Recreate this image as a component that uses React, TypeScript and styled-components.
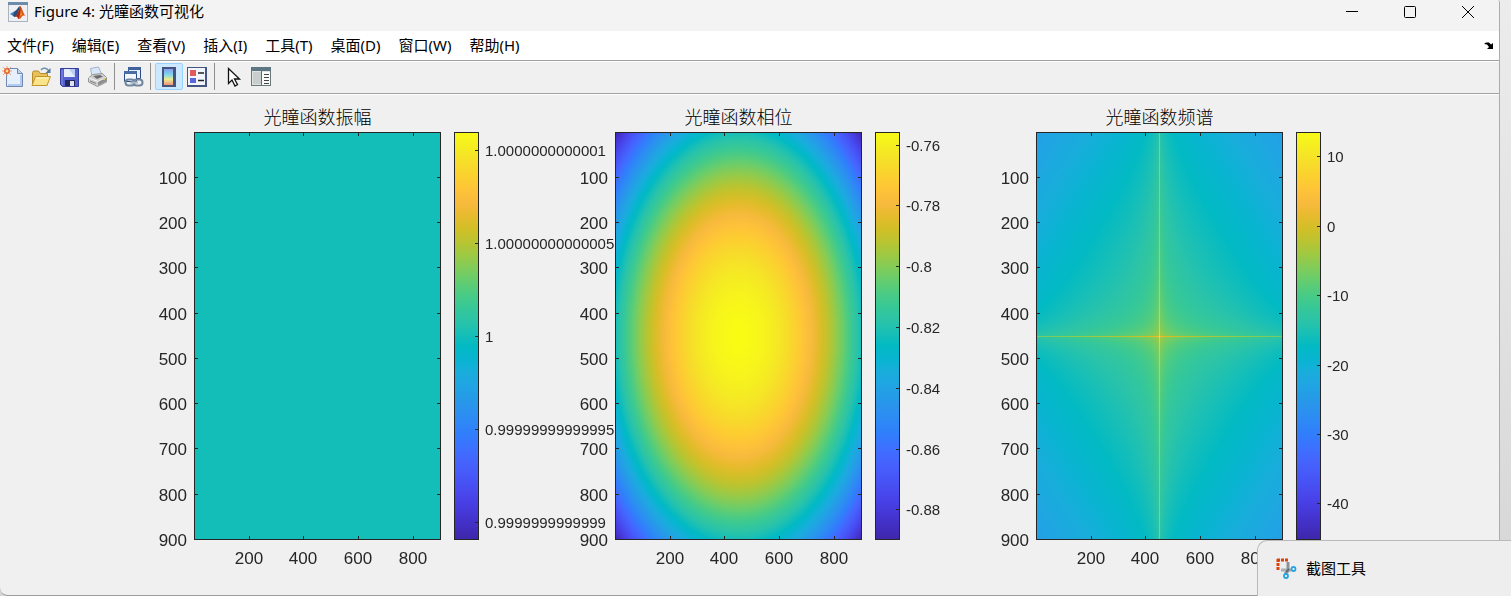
import { useLayoutEffect, useRef, useState } from 'react'
import type { ReactNode } from 'react'
import styled, { createGlobalStyle } from 'styled-components'

type Rgb = [number, number, number]

// every second colour of the 64 step parula map, plus its last one
const PARULA: Rgb[] = [
  [62, 38, 168], [66, 46, 192], [69, 55, 213], [71, 65, 230],
  [72, 77, 240], [71, 88, 248], [69, 99, 253], [62, 111, 255],
  [50, 124, 252], [46, 135, 247], [43, 145, 239], [37, 155, 232],
  [32, 165, 227], [24, 173, 219], [8, 181, 208], [2, 186, 195],
  [25, 191, 182], [44, 196, 167], [55, 200, 151], [74, 203, 132],
  [100, 205, 111], [129, 204, 89], [157, 201, 67], [185, 196, 49],
  [209, 191, 39], [230, 187, 45], [248, 186, 61], [254, 195, 56],
  [252, 207, 48], [247, 220, 42], [245, 233, 36], [247, 245, 27],
  [249, 251, 21],
]

const stopAt = (i: number) => Math.min((i * 2) / 63, 1)

const parula = (t: number): Rgb => {
  const p = Math.min(Math.max(t, 0), 1)
  const i = Math.min(Math.floor((p * 63) / 2), PARULA.length - 2)
  const f = (p - stopAt(i)) / (stopAt(i + 1) - stopAt(i))
  return [0, 1, 2].map((c) => PARULA[i][c] + (PARULA[i + 1][c] - PARULA[i][c]) * f) as Rgb
}

const parulaGradient = PARULA.map((c, i) => `rgb(${c.join(',')}) ${stopAt(i) * 100}%`).join(', ')

type Field = (u: number, v: number, du: number, dv: number) => number

const amplitude: Field = () => 0.5

const phase: Field = (u, v) => 1 - (u * u + v * v) / 2

// log magnitude along one axis of the separable spectrum
const logMag = (u: number, du: number, peak: number) => {
  const a = Math.abs(u)
  if (a < du / 2) return peak
  return -9.15 - 2.8 * a * a - 2 * Math.log(a + 0.02)
}

const spectrum: Field = (u, v, du, dv) =>
  (logMag(u, du, 8.8) + logMag(v - dv / 2, dv, 4.4) + 45.2) / 58.7

interface ColorTick {
  label: string
  at: number
}

interface PlotData {
  title: string
  field: Field
  ticks: ColorTick[]
}

const scale = (labels: string[], first: number, step: number): ColorTick[] =>
  labels.map((label, i) => ({ label, at: first + step * i }))

const PLOTS: PlotData[] = [
  {
    title: '光瞳函数振幅',
    field: amplitude,
    ticks: scale(
      ['1.0000000000001', '1.00000000000005', '1', '0.99999999999995', '0.9999999999999'],
      0.043,
      0.228
    ),
  },
  {
    title: '光瞳函数相位',
    field: phase,
    ticks: scale(['-0.76', '-0.78', '-0.8', '-0.82', '-0.84', '-0.86', '-0.88'], 0.031, 0.149),
  },
  {
    title: '光瞳函数频谱',
    field: spectrum,
    ticks: scale(['10', '0', '-10', '-20', '-30', '-40'], 0.06, 0.17),
  },
]

const X_TICKS = [200, 400, 600, 800]
const Y_TICKS = [100, 200, 300, 400, 500, 600, 700, 800, 900]
const SAMPLES = 900

const useSize = () => {
  const ref = useRef<HTMLDivElement>(null)
  const [size, setSize] = useState({ w: 0, h: 0 })

  useLayoutEffect(() => {
    const el = ref.current
    if (!el) return
    const measure = () => setSize({ w: el.clientWidth, h: el.clientHeight })
    measure()
    const observer = new ResizeObserver(measure)
    observer.observe(el)
    return () => observer.disconnect()
  }, [])

  return { ref, ...size }
}

const Heatmap = ({ field, w, h }: { field: Field; w: number; h: number }) => {
  const ref = useRef<HTMLCanvasElement>(null)

  useLayoutEffect(() => {
    const ctx = ref.current?.getContext('2d')
    if (!ctx || !w || !h) return
    const image = ctx.createImageData(w, h)
    for (let y = 0; y < h; y++) {
      for (let x = 0; x < w; x++) {
        const u = ((x + 0.5) / w) * 2 - 1
        const v = ((y + 0.5) / h) * 2 - 1
        const [r, g, b] = parula(field(u, v, 2 / w, 2 / h))
        image.data.set([r, g, b, 255], (y * w + x) * 4)
      }
    }
    ctx.putImageData(image, 0, 0)
  }, [field, w, h])

  return <Canvas ref={ref} width={w} height={h} />
}

const Axes = ({ title, field }: { title: string; field: Field }) => {
  const { ref, w, h } = useSize()
  const px = (v: number) => Math.round(((v - 0.5) / SAMPLES) * (w - 1))
  const py = (v: number) => Math.round(((v - 0.5) / SAMPLES) * (h - 1))

  return (
    <PlotBox ref={ref}>
      <Heatmap field={field} w={w} h={h} />
      <Overlay role='img' aria-label={title}>
        {w > 0 && <rect className='frame' x={0.5} y={0.5} width={w - 1} height={h - 1} />}
        {X_TICKS.map((v) => (
          <g key={v}>
            <rect x={px(v)} y={0} width={1} height={4} />
            <rect x={px(v)} y={h - 4} width={1} height={4} />
            <text className='axis' x={px(v)} y={h + 24} textAnchor='middle'>
              {v}
            </text>
          </g>
        ))}
        {Y_TICKS.map((v) => (
          <g key={v}>
            <rect x={0} y={py(v)} width={4} height={1} />
            <rect x={w - 4} y={py(v)} width={4} height={1} />
            <text className='axis' x={-7} y={py(v) + 7} textAnchor='end'>
              {v}
            </text>
          </g>
        ))}
      </Overlay>
    </PlotBox>
  )
}

const Colorbar = ({ ticks }: { ticks: ColorTick[] }) => {
  const { ref, w, h } = useSize()

  return (
    <ColorBox ref={ref}>
      <Overlay>
        {w > 0 && <rect className='frame' x={0.5} y={0.5} width={w - 1} height={h - 1} />}
        {ticks.map(({ label, at }) => {
          const y = Math.round(at * h)
          return (
            <g key={label}>
              <rect x={w - 4} y={y} width={4} height={1} />
              <text className='scale' x={w + 6} y={y + 6}>
                {label}
              </text>
            </g>
          )
        })}
      </Overlay>
    </ColorBox>
  )
}

const MatlabLogo = () => (
  <svg width='20' height='20' viewBox='0 0 20 20'>
    <rect x='0.5' y='0.5' width='19' height='19' fill='#eef0f3' stroke='#aab4c0' />
    <rect x='0' y='0' width='20' height='3' fill='#6d8cab' />
    <path d='M2 12l5-3 3 2-3 4z' fill='#3d7ab8' />
    <path d='M7 9c2-1 3-4 5-5l-2 8-3 3-2-1z' fill='#274f7d' />
    <path d='M12 4c2 1 3 7 6 11-2-2-3-2-5 1-1 1-2 1-3 1 0-2-1-3-3-2 3-3 4-7 5-11z' fill='#dd5a1c' />
    <path d='M12 4c1 3 1 8-2 13 0-2-1-3-3-2 3-3 4-7 5-11z' fill='#a52b18' />
    <path d='M12 5c1 3 1 6 0 9l2-1z' fill='#f6a02d' />
  </svg>
)

const NewIcon = () => (
  <svg width='22' height='22' viewBox='0 0 22 22'>
    <path d='M4.5 2.500h11l5 5v13h-16z' fill='#e6f0fc' stroke='#6f87b5' />
    <path d='M19 9v10H6' fill='none' stroke='#b4cbed' strokeWidth='2' />
    <path d='M15.500 2.500v5h5' fill='#bfd2ee' stroke='#6f87b5' />
    <path d='M1 1l8 8M9 1L1 9M5 0v10M0 5h10' stroke='#eaa17c' />
    <circle cx='5' cy='5' r='3' fill='#e8642d' />
    <circle cx='5' cy='5' r='1.400' fill='#ffd9a0' />
  </svg>
)

const OpenIcon = () => (
  <svg width='22' height='22' viewBox='0 0 22 22'>
    <path d='M2.500 19V6.500l1-1.500h5l2 2.500h7V19z' fill='#e9c057' stroke='#b58a27' />
    <path d='M5.500 10.500h15l-3.500 9H2z' fill='#fbe38a' stroke='#c2952c' />
    <path d='M6 12h12' stroke='#fff6c5' />
    <path d='M11 4c2-3 6-2 8 1' fill='none' stroke='#6f8fae' strokeWidth='1.500' />
    <path d='M20.500 2v5h-5z' fill='#54789c' />
  </svg>
)

const SaveIcon = () => (
  <svg width='22' height='22' viewBox='0 0 22 22'>
    <path d='M2.500 2.500h18v18h-16l-2-2z' fill='#5560d0' stroke='#343c9c' />
    <path d='M4 4v14l1 1' fill='none' stroke='#8790ec' />
    <path d='M6 3h11v8H6z' fill='#e6eefc' />
    <path d='M11 3h6v8z' fill='#b8cdf3' />
    <path d='M7 14h10v6H7z' fill='#23285e' />
    <path d='M12 15h4v5h-4z' fill='#dfe3f0' />
  </svg>
)

const PrintIcon = () => (
  <svg width='22' height='22' viewBox='0 0 22 22'>
    <path d='M6 10L4.500 2.500l8-1.500 3.500 8z' fill='#d9e6f8' stroke='#a3b4cd' />
    <path d='M2.500 12l4-3.500 10-1 4 4v4.500l-9 4.500-9-4.500z' fill='#cfcfcf' stroke='#979797' />
    <path d='M3 12l9 3.500 8-4' fill='none' stroke='#f5f5f5' />
    <path d='M7 10l7-1 3 1.500-6 2.500z' fill='#6c6c6c' />
    <path d='M12 16l8-4v3.500l-8 4z' fill='#8e8e8e' />
    <path d='M4 15l6 2.500' stroke='#777' />
    <rect x='17' y='12.500' width='2' height='1.500' fill='#d8cf52' />
  </svg>
)

const LinkIcon = () => (
  <svg width='22' height='22' viewBox='0 0 22 22'>
    <path d='M6.500 1.500h12v11h-12z' fill='#e8f0fa' stroke='#2b4a82' />
    <path d='M6 1h13v3H6z' fill='#3f629c' />
    <path d='M2.500 5.500h12v10h-12z' fill='#f3f7fc' stroke='#2b4a82' />
    <path d='M2 5h13v3H2z' fill='#4a6da8' />
    <rect x='3.500' y='13.500' width='9' height='6' rx='3' fill='none' stroke='#71869e' strokeWidth='2' />
    <rect x='11.500' y='13.500' width='9' height='6' rx='3' fill='none' stroke='#71869e' strokeWidth='2' />
    <path d='M8 16.500h8' stroke='#a9bacb' strokeWidth='2' />
  </svg>
)

const ColorbarIcon = () => (
  <svg width='22' height='22' viewBox='0 0 22 22'>
    <defs>
      <linearGradient id='bar' x1='0' y1='0' x2='0' y2='1'>
        <stop offset='0' stopColor='#86a0f0' />
        <stop offset='0.350' stopColor='#7fd6ea' />
        <stop offset='0.650' stopColor='#ecec8e' />
        <stop offset='1' stopColor='#f0917c' />
      </linearGradient>
    </defs>
    <rect x='4' y='1' width='14' height='20' fill='#46557f' />
    <rect x='6' y='3' width='9' height='16' fill='url(#bar)' />
  </svg>
)

const LegendIcon = () => (
  <svg width='22' height='22' viewBox='0 0 22 22'>
    <rect x='1' y='1' width='20' height='20' fill='#46557f' />
    <rect x='2' y='2' width='17' height='17' fill='#f1f5fc' />
    <rect x='4' y='4' width='6' height='6' fill='#e2595c' />
    <rect x='4' y='12' width='6' height='5' fill='#5a66dd' />
    <path d='M12 7h6M12 14.500h6' stroke='#222' strokeWidth='1.500' />
  </svg>
)

const CursorIcon = () => (
  <svg width='22' height='22' viewBox='0 0 22 22'>
    <path d='M6.500 2.500v15l3.500-3.500 3 6 2.500-1.500-3-5.500h5z' fill='#fff' stroke='#111' strokeWidth='1.300' />
  </svg>
)

const InspectorIcon = () => (
  <svg width='22' height='22' viewBox='0 0 22 22'>
    <rect x='1.500' y='1.500' width='19' height='18' fill='#dfe3e4' stroke='#6c7779' />
    <rect x='1' y='1' width='20' height='4' fill='#5d7682' />
    <rect x='3' y='6' width='8' height='12' fill='#c8cdce' />
    <rect x='12' y='6' width='8' height='13' fill='#fafafa' />
    <path d='M11.500 5v14' stroke='#5f6a6d' />
    <path d='M14 8.500h5M14 11.500h5M14 14.500h5M14 17.500h5' stroke='#444' />
  </svg>
)

const SnipIcon = () => (
  <svg width='22' height='22' viewBox='0 0 22 22'>
    <path d='M2 3h11M3 2v11' stroke='#d8420f' strokeWidth='3' strokeDasharray='3 1' fill='none' />
    <path d='M6 13h10' stroke='#a9b0b6' strokeWidth='3' />
    <path d='M13 5v9l-3 3' stroke='#8b9299' strokeWidth='3' fill='none' />
    <path d='M11 15l3-3' stroke='#5d656c' strokeWidth='1.500' />
    <circle cx='18.500' cy='12' r='2' fill='#fff' stroke='#27a3e2' strokeWidth='1.800' />
    <circle cx='11' cy='19' r='2' fill='#fff' stroke='#27a3e2' strokeWidth='1.800' />
  </svg>
)

const MENUS = ['文件(F)', '编辑(E)', '查看(V)', '插入(I)', '工具(T)', '桌面(D)', '窗口(W)', '帮助(H)']

const TOOL_GROUPS: { name: string; icon: ReactNode; active?: boolean }[][] = [
  [
    { name: '新建图窗', icon: <NewIcon /> },
    { name: '打开文件', icon: <OpenIcon /> },
    { name: '保存图窗', icon: <SaveIcon /> },
    { name: '打印图窗', icon: <PrintIcon /> },
  ],
  [{ name: '链接绘图', icon: <LinkIcon /> }],
  [
    { name: '插入颜色栏', icon: <ColorbarIcon />, active: true },
    { name: '插入图例', icon: <LegendIcon /> },
  ],
  [
    { name: '编辑绘图', icon: <CursorIcon /> },
    { name: '打开属性检查器', icon: <InspectorIcon /> },
  ],
]

const App = () => {
  return (
    <Desktop>
      <GlobalStyle />
      <Window>
        <TitleBar>
          <MatlabLogo />
          <WindowTitle>Figure 4: 光瞳函数可视化</WindowTitle>
          <CaptionButton aria-label='最小化'>
            <svg width='14' height='14' viewBox='0 0 14 14'>
              <path d='M1 6.500h12' />
            </svg>
          </CaptionButton>
          <CaptionButton aria-label='最大化'>
            <svg width='14' height='14' viewBox='0 0 14 14'>
              <rect x='1.500' y='1.500' width='11' height='11' rx='1' />
            </svg>
          </CaptionButton>
          <CaptionButton aria-label='关闭'>
            <svg width='14' height='14' viewBox='0 0 14 14'>
              <path d='M1 1l12 12M13 1L1 13' />
            </svg>
          </CaptionButton>
        </TitleBar>

        <MenuBar>
          {MENUS.map((menu) => (
            <MenuButton key={menu}>{menu}</MenuButton>
          ))}
          <DockButton aria-label='停靠'>
            <svg width='10' height='8' viewBox='0 0 10 8'>
              <path d='M0 2l2-1.500 3 0 2 2L9 1v6H3l2-2-2-2.500z' fill='#000' />
            </svg>
          </DockButton>
        </MenuBar>

        <Toolbar role='toolbar'>
          {TOOL_GROUPS.map((group) => (
            <ToolGroup key={group[0].name}>
              {group.map(({ name, icon, active }) => (
                <ToolButton key={name} aria-label={name} $active={active}>
                  {icon}
                </ToolButton>
              ))}
            </ToolGroup>
          ))}
        </Toolbar>

        <Figure>
          {PLOTS.map(({ title, field, ticks }) => (
            <Panel key={title}>
              <PlotTitle>{title}</PlotTitle>
              <Axes title={title} field={field} />
              <Colorbar ticks={ticks} />
            </Panel>
          ))}
        </Figure>
      </Window>

      <Toast>
        <SnipIcon />
        <span>截图工具</span>
      </Toast>
    </Desktop>
  )
}

const GlobalStyle = createGlobalStyle`
  * {
    box-sizing: border-box;
  }

  body {
    margin: 0;
    font-family: 'Noto Sans', 'Noto Sans CJK SC', sans-serif;
    color: #000;
  }

  button {
    padding: 0;
    border: 0;
    background: none;
    color: inherit;
    font: inherit;
  }

  svg {
    display: block;
    flex-shrink: 0;
  }
`

const Desktop = styled.div`
  position: relative;
  display: flex;
  min-height: 100vh;
  padding-right: 11px;
  overflow: hidden;
  background: linear-gradient(#ececec, #d6d6d6);
`

const Window = styled.div`
  flex: 1;
  display: flex;
  flex-direction: column;
  min-width: 0;
  border-right: 1px solid #acacac;
  border-bottom: 1px solid #9c9c9c;
  border-radius: 0 3px 0 8px;
  overflow: hidden;
  background: #f0f0f0;
`

const TitleBar = styled.header`
  display: flex;
  align-items: center;
  height: 31px;
  padding: 0 2px 7px 8px;
  background: #f3f3f3;
`

const WindowTitle = styled.h1`
  flex: 1;
  margin: 0 0 0 6px;
  padding-bottom: 2px;
  font-size: 15px;
  line-height: 20px;
  font-weight: 400;
`

const CaptionButton = styled.button`
  display: flex;
  align-items: center;
  justify-content: center;
  width: 58px;
  height: 24px;

  path,
  rect {
    fill: none;
    stroke: #000;
  }
`

const MenuBar = styled.nav`
  display: flex;
  align-items: center;
  gap: 18px;
  height: 30px;
  padding: 0 5px 0 7px;
  border-bottom: 1px solid #a0a0a0;
  background: #fff;
`

const MenuButton = styled.button`
  padding-bottom: 2px;
  font-size: 15px;
  line-height: 20px;
  white-space: nowrap;
`

const DockButton = styled.button`
  margin-left: auto;
`

const Toolbar = styled.div`
  display: flex;
  height: 33px;
  margin-left: -1px;
  padding: 1px 0 3px;
  border-top: 1px solid #fff;
  border-bottom: 1px solid #a0a0a0;
`

const ToolGroup = styled.div`
  display: flex;

  & + & {
    margin-left: 3px;
    padding-left: 4px;
    border-left: 1px solid #8f8f8f;
  }
`

const ToolButton = styled.button<{ $active?: boolean }>`
  display: flex;
  align-items: center;
  justify-content: center;
  width: 28px;
  height: 27px;
  border: 1px solid ${({ $active }) => ($active ? '#99d1ff' : 'transparent')};
  border-radius: 2px;
  background: ${({ $active }) => ($active ? '#cce8ff' : 'none')};
`

const Figure = styled.main`
  flex: 1;
  display: flex;
  padding: 11px 81px 55px 155px;
  border-top: 1px solid #fff;
`

const Panel = styled.section`
  flex: 1;
  display: grid;
  grid-template-columns: 39px minmax(0, 1fr) 13px 25px 97px;
  grid-template-rows: 26px minmax(200px, 1fr);
  min-width: 0;
`

const PlotTitle = styled.h2`
  grid-column: 2;
  margin: 0;
  font-size: 18px;
  line-height: 24px;
  font-weight: 300;
  font-family: 'Liberation Serif', 'Noto Sans CJK SC', serif;
  text-align: center;
  white-space: nowrap;
`

const PlotBox = styled.div`
  position: relative;
  grid-column: 2;
  grid-row: 2;
`

const ColorBox = styled.div`
  position: relative;
  grid-column: 4;
  grid-row: 2;
  background: linear-gradient(to top, ${parulaGradient});
`

const Canvas = styled.canvas`
  position: absolute;
  inset: 0;
`

// ticks and labels drawn over the plot, labels spill outside the box
const Overlay = styled.svg`
  position: absolute;
  inset: 0;
  width: 100%;
  height: 100%;
  overflow: visible;
  fill: #262626;
  font-family: 'Liberation Sans', Arial, sans-serif;

  .frame {
    fill: none;
    stroke: #262626;
  }

  .axis {
    font-size: 17px;
  }

  .scale {
    font-size: 15px;
  }
`

const Toast = styled.aside`
  position: absolute;
  right: 0;
  bottom: 0;
  display: flex;
  align-items: center;
  gap: 9px;
  width: 254px;
  height: 56px;
  padding: 0 0 2px 17px;
  border: 1px solid #b9b9b9;
  border-width: 1px 0 0 1px;
  border-radius: 10px 0 0 0;
  background: #eee;
  font-size: 15px;
  line-height: 20px;
`

export default App
